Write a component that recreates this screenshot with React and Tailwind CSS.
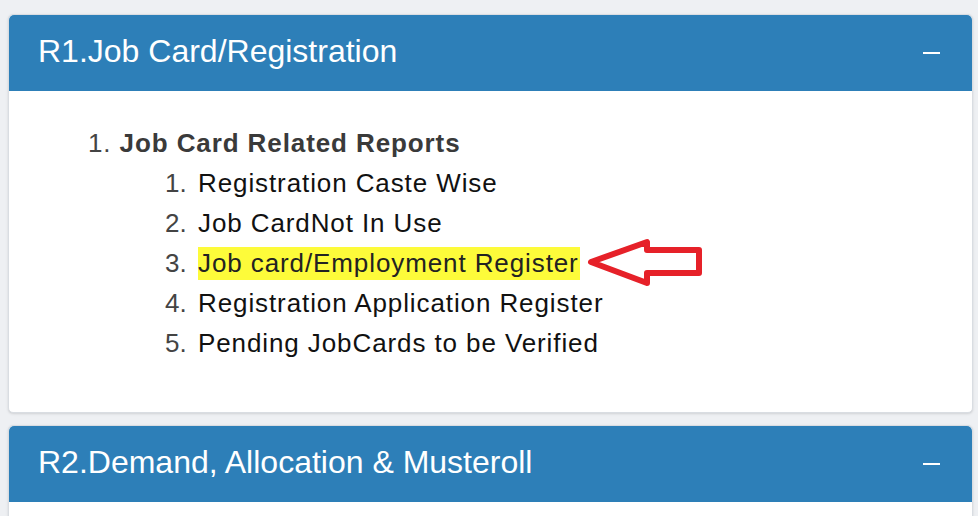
import React from 'react';

const font = { fontFamily: '"Liberation Sans", Arial, sans-serif' };

const subItems = [
  'Registration Caste Wise',
  'Job CardNot In Use',
  'Job card/Employment Register',
  'Registration Application Register',
  'Pending JobCards to be Verified',
];

const Arrow = () => (
  <svg width="124" height="52" viewBox="0 0 124 52" className="ml-[6px] shrink-0">
    <path
      d="M5 25 L61 5 L61 13 L113 13 L113 36 L61 36 L61 46 Z"
      fill="#fff"
      stroke="#e62129"
      strokeWidth="6"
      strokeLinejoin="round"
    />
  </svg>
);

const PanelHeader = ({ title }) => (
  <div className="h-[76px] bg-[#2d7fb8] rounded-t-[5px] flex items-center justify-between pl-[29px] pr-[32px]">
    <span className="text-white text-[32px] leading-[36px] pb-[4px]">{title}</span>
    <span className="block w-[17px] h-[2px] bg-white" />
  </div>
);

const App = () => {
  return (
    <div className="w-[978px] h-[516px] overflow-hidden bg-[#eef0f3] pt-[14px] pl-[8px] pr-[5px]" style={font}>
      <div className="bg-white rounded-[5px] border border-[#d9dde2] shadow-sm">
        <PanelHeader title="R1.Job Card/Registration" />
        <div className="pt-[32px] pb-[49px] pl-[79px] text-[26px] leading-[40px] tracking-[0.9px]">
          <div className="text-[#3a3a3a]">
            <span className="text-[#444]">1.</span> <span className="font-bold">Job Card Related Reports</span>
          </div>
          <div className="pl-[77px]">
            {subItems.map((item, i) => (
              <div key={item} className="flex items-center h-[40px] text-[#111]">
                <span className="w-[33px] text-[#444] tracking-normal">{i + 1}.</span>
                {i === 2 ? (
                  <>
                    <span className="bg-[#fdfb3a] text-[#222] py-[3px] pr-[1px] leading-[27px]">{item}</span>
                    <Arrow />
                  </>
                ) : (
                  <span>{item}</span>
                )}
              </div>
            ))}
          </div>
        </div>
      </div>
      <div className="mt-[12px] bg-white rounded-[5px] border border-[#d9dde2] shadow-sm h-[120px]">
        <PanelHeader title="R2.Demand, Allocation & Musteroll" />
      </div>
    </div>
  );
};

export default App;
